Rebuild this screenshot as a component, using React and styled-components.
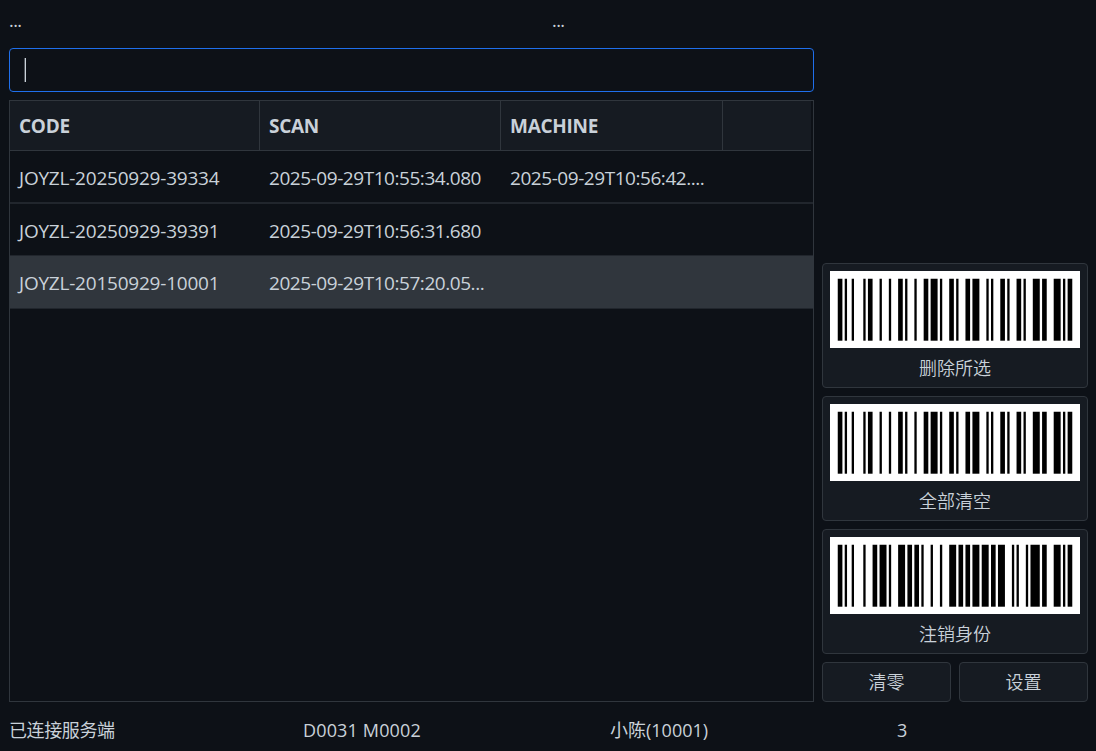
import styled, { createGlobalStyle, css } from "styled-components";

const GlobalStyle = createGlobalStyle`
  * {
    box-sizing: border-box;
  }
  body {
    margin: 0;
    background-color: #0d1117;
    color: #c9d1d9;
    font-family: "Open Sans", "Noto Sans CJK SC", sans-serif;
    font-size: 18px;
  }
`;

const Window = styled.div`
  width: 1096px;
  height: 751px;
  padding: 0 8px 0 9px;
  display: flex;
  flex-direction: column;
  overflow: hidden;
`;

const Main = styled.div`
  display: flex;
  gap: 8px;
  height: 702px;
`;

const Left = styled.div`
  width: 805px;
  display: flex;
  flex-direction: column;
`;

const Labels = styled.div`
  height: 48px;
  display: grid;
  grid-template-columns: 543px 1fr;
  align-items: center;
  line-height: 24px;
  padding-bottom: 8px;
  letter-spacing: -0.6px;
`;

const ScanInput = styled.div`
  height: 44px;
  flex-shrink: 0;
  border: 1px solid #1f6feb;
  border-radius: 4px;
  display: flex;
  align-items: center;
  padding-left: 14px;
  margin-bottom: 8px;
`;

const Caret = styled.div`
  width: 2px;
  height: 24px;
  background: linear-gradient(to right, #50555c 50%, #c9d1d9 50%);
`;

const Table = styled.div`
  flex: 1;
  border: 1px solid #30363d;
`;

const columns = css`
  display: grid;
  grid-template-columns: 250px 241px 222px 1fr;
`;

const Header = styled.div`
  ${columns}
  height: 50px;
  margin-right: 2px;
  background-color: #161b22;
  border-bottom: 1px solid #30363d;
`;

const HeaderCell = styled.div`
  border-right: ${props => props.$last ? "none" : "1px solid #30363d"};
  padding-left: 9px;
  font-size: 19px;
  font-weight: 700;
  line-height: 50px;
  letter-spacing: -0.28px;
`;

const Row = styled.div`
  ${columns}
  height: ${props => props.$height}px;
  background-color: ${props => props.$selected ? "#30363d" : "transparent"};
  border-bottom: ${props => props.$line}px solid #21262d;
`;

const Cell = styled.div`
  padding-left: 9px;
  font-size: 19px;
  line-height: 55px;
  height: 50px;
  white-space: nowrap;
  letter-spacing: ${props => props.$spacing}px;
`;

const Side = styled.div`
  width: 266px;
  display: flex;
  flex-direction: column;
  justify-content: flex-end;
  gap: 8px;
`;

const button = css`
  appearance: none;
  margin: 0;
  background-color: #161b22;
  border: 1px solid #30363d;
  border-radius: 4px;
  color: #c9d1d9;
  font-family: inherit;
  font-size: 18px;
  font-weight: 350;
`;

const BarcodeButton = styled.button`
  ${button}
  height: 125px;
  padding: 7px 7px 0;
  display: flex;
  flex-direction: column;
  align-items: center;
  svg {
    display: block;
    flex-shrink: 0;
    background-color: #fff;
  }
`;

const ButtonLabel = styled.span`
  line-height: 26px;
  margin-top: 7px;
`;

const Buttons = styled.div`
  display: grid;
  grid-template-columns: 1fr 1fr;
  gap: 8px;
`;

const SmallButton = styled.button`
  ${button}
  height: 40px;
  padding: 0;
  line-height: 36px;
`;

const Footer = styled.div`
  height: 49px;
  padding-top: 15px;
  display: grid;
  grid-template-columns: 294px 307px 287px 1fr;
  line-height: 26px;
  white-space: nowrap;
`;

const FooterText = styled.div`
  letter-spacing: ${props => props.$spacing || 0}px;
`;

// Code 128 B symbols: alternating bar and space widths, in modules
const DELETE_CODE = [
  "211214", "112313", "132113", "132131", "132113",
  "213311", "132113", "211331", "2331112",
];
const LOGOUT_CODE = [
  "211214", "132131", "133121", "211313", "133121",
  "213131", "213311", "131141", "2331112",
];

function Barcode({ code }) {
  const unit = 2.322;
  const bars = [];
  let x = 0;
  code.join("").split("").forEach((w, i) => {
    // every symbol but the stop has six parts, so parity holds over the whole code
    if (i % 2 === 0) bars.push({ x, w: Number(w) });
    x += Number(w);
  });
  return (
    <svg width="250" height="77" viewBox="0 0 250 77">
      {bars.map(bar => (
        <rect key={bar.x} x={7.75 + bar.x * unit} y="7.75" width={bar.w * unit} height="61.95" fill="#000" />
      ))}
    </svg>
  );
}

const rows = [
  { code: "JOYZL-20250929-39334", scan: "2025-09-29T10:55:34.080", machine: "2025-09-29T10:56:42....", height: 53, line: 2 },
  { code: "JOYZL-20250929-39391", scan: "2025-09-29T10:56:31.680", machine: "", height: 52, line: 1 },
  { code: "JOYZL-20150929-10001", scan: "2025-09-29T10:57:20.05...", machine: "", height: 53, line: 1, selected: true },
];

export default function App() {
  return (
    <>
      <GlobalStyle />
      <Window>
        <Main>
          <Left>
            <Labels>
              <span>...</span>
              <span>...</span>
            </Labels>
            <ScanInput>
              <Caret />
            </ScanInput>
            <Table>
              <Header>
                <HeaderCell>CODE</HeaderCell>
                <HeaderCell>SCAN</HeaderCell>
                <HeaderCell>MACHINE</HeaderCell>
                <HeaderCell $last />
              </Header>
              {rows.map(row => (
                <Row key={row.code} $height={row.height} $line={row.line} $selected={row.selected}>
                  <Cell $spacing={-0.22}>{row.code}</Cell>
                  <Cell $spacing={-0.45}>{row.scan}</Cell>
                  <Cell $spacing={-0.45}>{row.machine}</Cell>
                </Row>
              ))}
            </Table>
          </Left>
          <Side>
            <BarcodeButton>
              <Barcode code={DELETE_CODE} />
              <ButtonLabel>删除所选</ButtonLabel>
            </BarcodeButton>
            <BarcodeButton>
              <Barcode code={DELETE_CODE} />
              <ButtonLabel>全部清空</ButtonLabel>
            </BarcodeButton>
            <BarcodeButton>
              <Barcode code={LOGOUT_CODE} />
              <ButtonLabel>注销身份</ButtonLabel>
            </BarcodeButton>
            <Buttons>
              <SmallButton>清零</SmallButton>
              <SmallButton>设置</SmallButton>
            </Buttons>
          </Side>
        </Main>
        <Footer>
          <FooterText $spacing={-0.4}>已连接服务端</FooterText>
          <FooterText $spacing={0.15}>D0031 M0002</FooterText>
          <FooterText>小陈(10001)</FooterText>
          <FooterText>3</FooterText>
        </Footer>
      </Window>
    </>
  );
}
